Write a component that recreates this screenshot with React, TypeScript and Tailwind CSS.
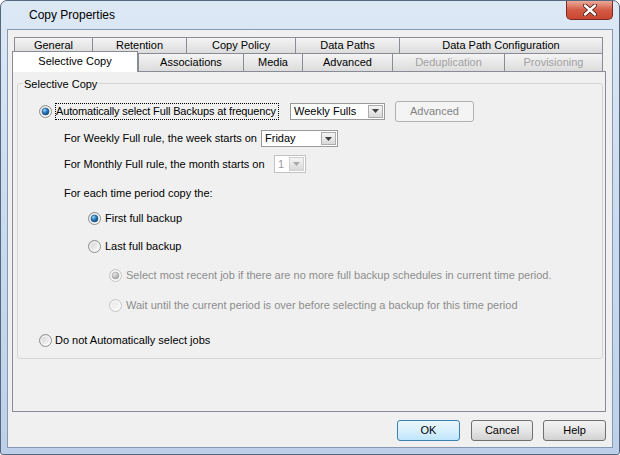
import React from "react";

const font = { fontFamily: '"Liberation Sans", Arial, sans-serif' };

function Radio({ checked = false, disabled = false }: { checked?: boolean; disabled?: boolean }) {
  const ring = disabled ? "#c4c4c4" : "#8e8f8f";
  return (
    <svg width="13" height="13" viewBox="0 0 13 13" className="shrink-0">
      <defs>
        <linearGradient id="rfill" x1="0" y1="0" x2="1" y2="1">
          <stop offset="0" stopColor="#cfcfcf" />
          <stop offset="1" stopColor="#ffffff" />
        </linearGradient>
        <linearGradient id="rfillDis" x1="0" y1="0" x2="1" y2="1">
          <stop offset="0" stopColor="#e6e6e6" />
          <stop offset="1" stopColor="#fafafa" />
        </linearGradient>
        <radialGradient id="rdot" cx="0.35" cy="0.3" r="0.8">
          <stop offset="0" stopColor="#9fdcff" />
          <stop offset="0.45" stopColor="#2b7ec4" />
          <stop offset="1" stopColor="#0d3b6b" />
        </radialGradient>
        <radialGradient id="rdotDis" cx="0.35" cy="0.3" r="0.8">
          <stop offset="0" stopColor="#e8e8e8" />
          <stop offset="1" stopColor="#9a9a9a" />
        </radialGradient>
      </defs>
      <circle cx="6.5" cy="6.5" r="6" fill={disabled ? "url(#rfillDis)" : "url(#rfill)"} stroke={ring} />
      <circle cx="6.5" cy="6.5" r="4.5" fill="none" stroke="#ffffff" strokeOpacity="0.7" />
      {checked && <circle cx="6.5" cy="6.5" r="3.5" fill={disabled ? "url(#rdotDis)" : "url(#rdot)"} stroke={disabled ? "#a8a8a8" : "#1c4f82"} strokeWidth="0.6" />}
    </svg>
  );
}

function Arrow({ disabled = false }: { disabled?: boolean }) {
  return (
    <svg width="7" height="4" viewBox="0 0 7 4">
      <path d="M0 0H7L3.5 4Z" fill={disabled ? "#a8a8a8" : "#404040"} />
    </svg>
  );
}

function Combo({ value, w, h, disabled = false }: { value: string; w: string; h: string; disabled?: boolean }) {
  return (
    <div className={`flex ${w} ${h} items-stretch border ${disabled ? "border-[#c2c2c2]" : "border-[#9a9a9a]"} bg-white p-px`}>
      <span className={`flex flex-1 items-center pl-[2px] ${disabled ? "text-[#9a9a9a]" : "text-black"}`}>{value}</span>
      <div className={`flex w-[15px] items-center justify-center border ${disabled ? "border-[#d0d0d0]" : "border-[#acacac]"} bg-gradient-to-b from-[#f4f4f4] to-[#d9d9d9]`}>
        <Arrow disabled={disabled} />
      </div>
    </div>
  );
}

const tabCls =
  "flex items-center justify-center border-l border-t border-[#898c95] bg-gradient-to-b from-[#f4f4f4] to-[#dcdcdc]";

export default function App() {
  const row1 = [
    { label: "General", w: "w-[78px]" },
    { label: "Retention", w: "w-[94px]" },
    { label: "Copy Policy", w: "w-[109px]" },
    { label: "Data Paths", w: "w-[104px]" },
    { label: "Data Path Configuration", w: "w-[204px] border-r" },
  ];
  const row2 = [
    { label: "Associations", w: "w-[105px]", off: false },
    { label: "Media", w: "w-[59px]", off: false },
    { label: "Advanced", w: "w-[90px]", off: false },
    { label: "Deduplication", w: "w-[112px]", off: true },
    { label: "Provisioning", w: "w-[99px] border-r", off: true },
  ];

  return (
    <div style={font} className="h-[455px] w-[620px] overflow-hidden whitespace-nowrap text-[11px] text-black">
      <div className="flex h-full flex-col rounded-t-[7px] rounded-b-[3px] border border-[#56687e] bg-gradient-to-b from-[#dde8f5] via-[#c9dbef] to-[#bcd1e9]">
        {/* title bar */}
        <div className="flex h-[28px] items-start justify-between">
          <span className="self-center pl-[28px] text-[12px] text-black">Copy Properties</span>
          <div className="mr-[6px] flex h-[19px] w-[47px] items-center justify-center rounded-b-[5px] border border-t-0 border-[#7a2a22] bg-gradient-to-b from-[#eaa99a] via-[#d35a44] to-[#c9462f]">
            <svg width="14" height="12" viewBox="0 0 14 12">
              <path d="M2 1.5L12 10.5M12 1.5L2 10.5" stroke="#4a1d18" strokeWidth="4.2" strokeLinecap="round" />
              <path d="M2 1.5L12 10.5M12 1.5L2 10.5" stroke="#ffffff" strokeWidth="2.4" strokeLinecap="round" />
            </svg>
          </div>
        </div>

        {/* client area */}
        <div className="ml-[6px] flex h-[419px] w-[606px] flex-col border border-[#8799b0] bg-[#f0f0f0] pl-[4px] pr-[6px] pt-[7px]">
          {/* tab row 1 */}
          <div className="ml-[2px] flex h-[16px]">
            {row1.map((t) => (
              <div key={t.label} className={`${tabCls} ${t.w} pb-px`}>
                {t.label}
              </div>
            ))}
          </div>
          {/* tab row 2 */}
          <div className="flex h-[18px] items-end">
            <div className="relative top-px z-10 flex h-[21px] w-[126px] items-center justify-center border-l border-r border-t border-[#898c95] bg-white pb-[2px]">
              Selective Copy
            </div>
            {row2.map((t) => (
              <div key={t.label} className={`${tabCls} ${t.w} h-[18px] ${t.off ? "text-[#a2a2a2]" : ""}`}>
                {t.label}
              </div>
            ))}
          </div>

          {/* tab page */}
          <div className="h-[341px] border border-[#898c95] bg-[#f0f0f0]">
            <div className="relative ml-[4px] mr-[2px] mt-[11px] h-[276px] rounded-[3px] border border-[#d5d5d5]">
              <span className="absolute -top-[8px] left-[5px] bg-[#f0f0f0] px-px">Selective Copy</span>

              <div className="mt-[16px] flex h-[22px] items-center pl-[21px]">
                <Radio checked />
                <span className="ml-[3px] flex h-[17px] w-[224px] items-center overflow-hidden border border-dotted border-black tracking-[-0.15px]">
                  Automatically select Full Backups at frequency
                </span>
                <div className="ml-[11px]">
                  <Combo value="Weekly Fulls" w="w-[95px]" h="h-[17px]" />
                </div>
                <div className="ml-[10px] flex h-[21px] w-[79px] items-center justify-center rounded-[3px] border border-[#adb2b5] bg-[#f4f4f4] text-[#838383]">
                  Advanced
                </div>
              </div>

              <div className="mt-[8px] flex h-[17px] items-center pl-[46px]">
                <span className="w-[197px]">For Weekly Full rule, the week starts on</span>
                <Combo value="Friday" w="w-[77px]" h="h-[17px]" />
              </div>

              <div className="mt-[8px] flex h-[18px] items-center pl-[46px]">
                <span className="w-[210px]">For Monthly Full rule, the month starts on</span>
                <Combo value="1" w="w-[32px]" h="h-[18px]" disabled />
              </div>

              <div className="mt-[12px] flex h-[16px] items-center pl-[46px]">For each time period copy the:</div>

              <div className="mt-[9px] flex h-[16px] items-center pl-[70px]">
                <Radio checked />
                <span className="ml-[4px]">First full backup</span>
              </div>

              <div className="mt-[12px] flex h-[16px] items-center pl-[70px]">
                <Radio />
                <span className="ml-[4px]">Last full backup</span>
              </div>

              <div className="mt-[13px] flex h-[16px] items-center pl-[91px] text-[#8d8d8d]">
                <Radio checked disabled />
                <span className="ml-[4px]">
                  Select most recent job if there are no more full backup schedules in current time period.
                </span>
              </div>

              <div className="mt-[14px] flex h-[16px] items-center pl-[91px] text-[#8d8d8d]">
                <Radio disabled />
                <span className="ml-[4px]">Wait until the current period is over before selecting a backup for this time period</span>
              </div>

              <div className="mt-[19px] flex h-[16px] items-center pl-[21px]">
                <Radio />
                <span className="ml-[3px]">Do not Automatically select jobs</span>
              </div>
            </div>
          </div>

          {/* buttons */}
          <div className="mt-[8px] flex h-[21px] justify-end">
            <div className="flex w-[63px] items-center justify-center rounded-[3px] border border-[#3c7fb1] bg-gradient-to-b from-[#eaf6fd] via-[#d9f0fc] to-[#bee6fd]">
              OK
            </div>
            <div className="ml-[11px] flex w-[62px] items-center justify-center rounded-[3px] border border-[#707070] bg-gradient-to-b from-[#f2f2f2] via-[#e6e6e6] to-[#d2d2d2]">
              Cancel
            </div>
            <div className="ml-[10px] flex w-[63px] items-center justify-center rounded-[3px] border border-[#707070] bg-gradient-to-b from-[#f2f2f2] via-[#e6e6e6] to-[#d2d2d2]">
              Help
            </div>
          </div>
        </div>
      </div>
    </div>
  );
}
